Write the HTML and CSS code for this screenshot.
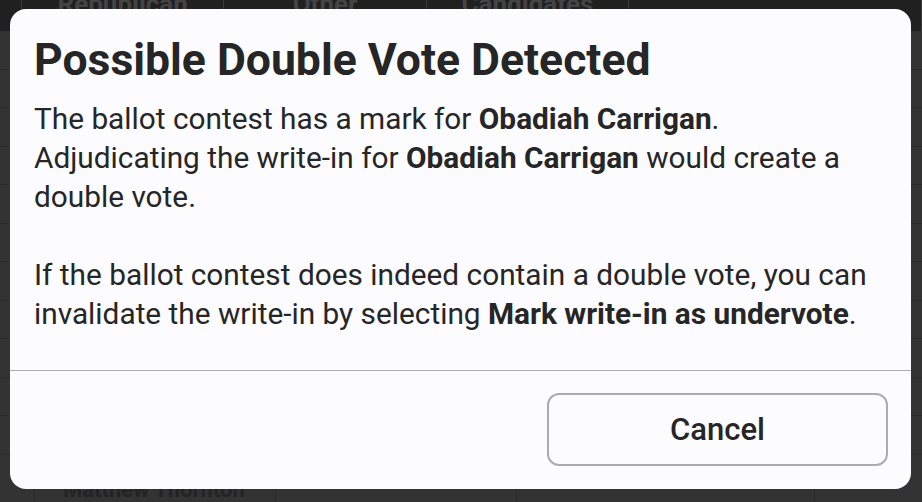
FILE: index.html
```html
<!DOCTYPE html>
<html lang="en">
<head>
<meta charset="utf-8">
<title>Possible Double Vote Detected</title>
<link rel="stylesheet" href="styles.css">
</head>
<body>
<div class="app">
  <div class="topbar">
    <div class="tab edge"></div>
    <div class="tab">Republican</div>
    <div class="tab">Other</div>
    <div class="tab">Candidates</div>
    <div class="tab box"><span class="chip"></span></div>
    <div class="tab rest"></div>
  </div>
  <div class="rows">
    <div class="row"></div>
    <div class="row"></div>
    <div class="row"></div>
    <div class="row"></div>
    <div class="row"></div>
    <div class="row"></div>
    <div class="row"></div>
    <div class="row"></div>
    <div class="row"></div>
    <div class="row"></div>
    <div class="row"></div>
    <div class="row last">
      <div class="cell edge"></div>
      <div class="cell name">Matthew Thornton</div>
      <div class="cell"></div>
      <div class="cell wide"></div>
      <div class="cell"></div>
    </div>
  </div>
</div>
<div class="overlay">
  <div class="dialog" role="alertdialog">
    <div class="content">
      <h1 class="title">Possible Double Vote Detected</h1>
      <p class="text">The ballot contest has a mark for <strong>Obadiah Carrigan</strong>. Adjudicating the write-in for <strong>Obadiah Carrigan</strong> would create a double vote.</p>
      <p class="text">If the ballot contest does indeed contain a double vote, you can invalidate the write-in by selecting <strong>Mark write-in as undervote</strong>.</p>
    </div>
    <div class="actions">
      <button class="btn" type="button">Cancel</button>
    </div>
  </div>
</div>
</body>
</html>
```

FILE: styles.css
```css
* { box-sizing: border-box; }
html, body {
  margin: 0;
  padding: 0;
  width: 922px;
  height: 502px;
  overflow: hidden;
  background: #333333;
  font-family: Roboto, "Noto Sans", sans-serif;
}
.app {
  display: flex;
  flex-direction: column;
  height: 502px;
}
.topbar {
  display: flex;
  height: 31px;
  background: #202020;
}
.tab {
  width: 241px;
  border-right: 1px solid #3a3a3a;
  color: #444444;
  font-size: 26px;
  font-weight: 700;
  text-align: center;
  line-height: 8px;
  overflow: hidden;
}
.tab.edge { width: 26px; }
.tab.box {
  width: 311px;
  text-align: left;
  padding-left: 197px;
}
.chip {
  display: inline-block;
  width: 38px;
  height: 20px;
  background: #1a1a1a;
  margin-top: 10px;
}
.tab.rest { flex: 1; border-right: 0; background: #2c2c2c; }
.rows {
  flex: 1;
  display: flex;
  flex-direction: column;
}
.row {
  flex: 1;
  border-bottom: 1px solid #2b2b2b;
}
.row.last {
  flex: 0 0 40px;
  display: flex;
  border-bottom: 0;
}
.cell {
  width: 241px;
  border-right: 1px solid #2a2a2a;
  color: #242424;
  font-size: 22px;
  font-weight: 700;
  padding: 22px 0 0 28px;
  white-space: nowrap;
  overflow: hidden;
}
.cell.edge { width: 35px; padding: 0; }
.cell.wide { width: 298px; }
.cell:last-child { flex: 1; border-right: 0; }
.overlay {
  position: absolute;
  inset: 0;
  padding: 9px 11px 13px 10px;
  display: flex;
}
.dialog {
  flex: 1;
  background: #fcfcfe;
  border-radius: 16px;
  display: flex;
  flex-direction: column;
  overflow: hidden;
}
.content {
  flex: 1;
  min-height: 0;
  padding: 25px 24px 0 24px;
  color: #262626;
}
.title {
  margin: 0 0 13px 0;
  font-size: 44.5px;
  font-weight: 700;
  line-height: 52px;
  letter-spacing: 0;
}
.text {
  margin: 0 0 39px 0;
  font-size: 29.8px;
  line-height: 39px;
}
.text:last-child { margin-bottom: 0; }
.text strong { font-weight: 700; }
.actions {
  flex: 0 0 auto;
  border-top: 1px solid #b0adb4;
  padding: 22px 23px 23px 24px;
  display: flex;
  justify-content: flex-end;
}
.btn {
  width: 341px;
  height: 73px;
  border: 2px solid #acacac;
  border-radius: 12px;
  background: #fcfcfe;
  color: #262626;
  font-family: Roboto, "Noto Sans", sans-serif;
  font-size: 31px;
  font-weight: 500;
}
```
